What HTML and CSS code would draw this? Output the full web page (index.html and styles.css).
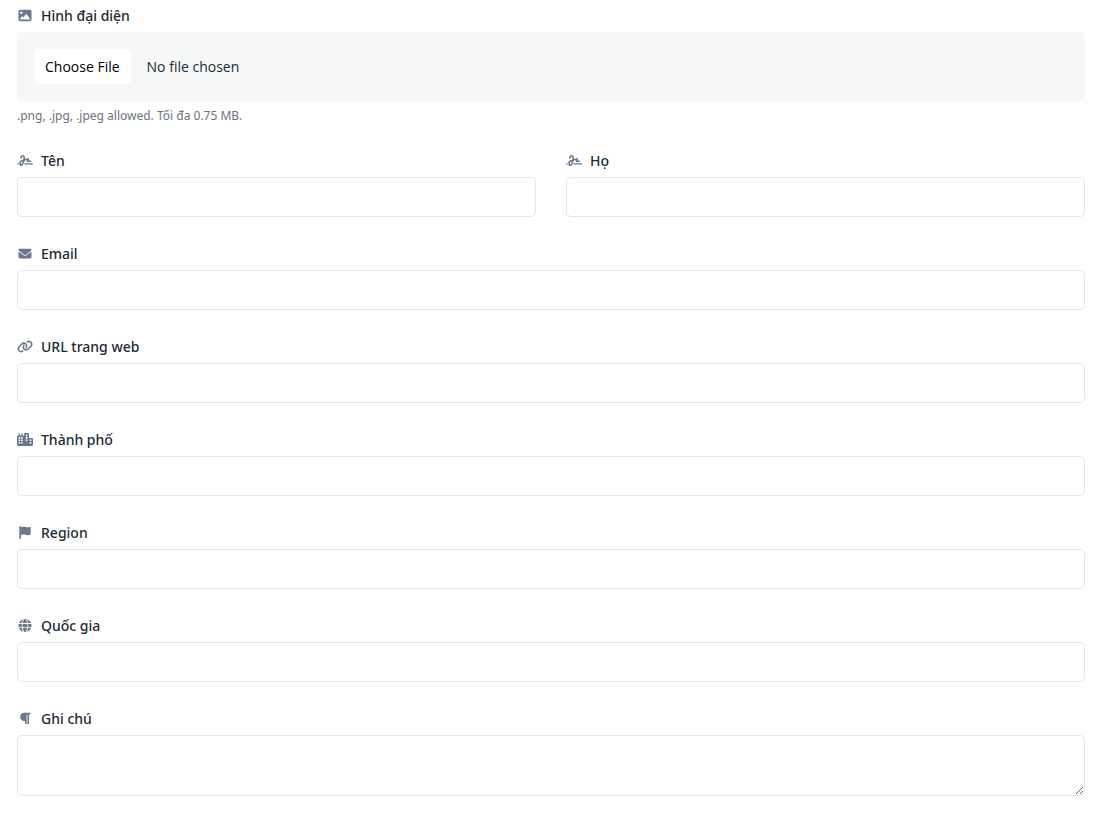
FILE: index.html
```html
<!DOCTYPE html>
<html lang="vi">
<head>
<meta charset="utf-8">
<meta name="viewport" content="width=device-width, initial-scale=1">
<title>Hồ sơ</title>
<link rel="stylesheet" href="styles.css">
</head>
<body>
<svg class="sprite" aria-hidden="true">
  <symbol id="signature" viewBox="0 0 640 512"><path d="M192 128c0-17.7 14.3-32 32-32s32 14.3 32 32v7.8c0 27.7-2.4 55.3-7.1 82.5l-84.4 25.3c-40.6 12.2-68.4 49.6-68.4 92v71.9c0 40 32.5 72.5 72.5 72.5c26 0 50-13.9 62.9-36.5l13.9-24.3c26.8-47 46.5-97.7 58.4-150.5l94.4-28.3-12.5 37.5c-3.3 9.8-1.6 20.5 4.4 28.8s15.7 13.3 26 13.3H544c17.7 0 32-14.3 32-32s-14.3-32-32-32H460.4l18-53.9c3.8-11.3 .9-23.8-7.4-32.4s-20.7-11.8-32.2-8.4L316.4 198.1c2.4-20.7 3.6-41.4 3.6-62.3V128c0-53-43-96-96-96s-96 43-96 96v32c0 17.7 14.3 32 32 32s32-14.3 32-32V128zm-9.2 177l49-14.7c-10.4 33.8-24.5 66.4-42.1 97.2l-13.9 24.3c-1.5 2.6-4.3 4.3-7.4 4.3c-4.7 0-8.5-3.8-8.5-8.5V335.6c0-14.1 9.3-26.6 22.8-30.7zM24 368c-13.3 0-24 10.7-24 24s10.7 24 24 24H64.3c-.2-2.8-.3-5.6-.3-8.5V368H24zm592 48c13.3 0 24-10.7 24-24s-10.7-24-24-24H305.9c-6.7 16.3-14.2 32.3-22.3 48H616z"/></symbol>
</svg>
<form class="profile">
  <div class="field">
    <label class="label" for="avatar">
      <svg class="icon" viewBox="0 0 512 512" aria-hidden="true"><path d="M0 96C0 60.7 28.7 32 64 32H448c35.3 0 64 28.7 64 64V416c0 35.3-28.7 64-64 64H64c-35.3 0-64-28.7-64-64V96zM323.8 202.5c-4.5-6.6-11.9-10.5-19.8-10.5s-15.4 3.9-19.8 10.5l-87 127.6L170.7 297c-4.6-5.7-11.5-9-18.7-9s-14.2 3.3-18.7 9l-64 80c-5.8 7.2-6.9 17.1-2.9 25.4s12.4 13.6 21.6 13.6h96 32H424c8.9 0 17.1-4.9 21.2-12.8s3.6-17.4-1.4-24.7l-120-176zM112 192a48 48 0 1 0 0-96 48 48 0 1 0 0 96z"/></svg>
      Hình đại diện
    </label>
    <input class="file" id="avatar" type="file" accept=".png,.jpg,.jpeg" aria-describedby="avatar-hint">
    <p class="hint" id="avatar-hint">.png, .jpg, .jpeg allowed. Tối đa 0.75 MB.</p>
  </div>
  <div class="row">
    <div class="field">
      <label class="label" for="first-name"><svg class="icon" aria-hidden="true"><use href="#signature"/></svg>Tên</label>
      <input class="control" id="first-name" type="text">
    </div>
    <div class="field">
      <label class="label" for="last-name"><svg class="icon" aria-hidden="true"><use href="#signature"/></svg>Họ</label>
      <input class="control" id="last-name" type="text">
    </div>
  </div>
  <div class="field">
    <label class="label" for="email">
      <svg class="icon" viewBox="0 0 512 512" aria-hidden="true"><path d="M48 64C21.5 64 0 85.5 0 112c0 15.1 7.1 29.3 19.2 38.4L236.8 313.6c11.4 8.5 27 8.5 38.4 0L492.8 150.4c12.1-9.1 19.2-23.3 19.2-38.4c0-26.5-21.5-48-48-48H48zM0 176V384c0 35.3 28.7 64 64 64H448c35.3 0 64-28.7 64-64V176L294.4 339.2c-22.8 17.1-54 17.1-76.8 0L0 176z"/></svg>
      Email
    </label>
    <input class="control" id="email" type="email">
  </div>
  <div class="field">
    <label class="label" for="url">
      <svg class="icon" viewBox="0 0 640 512" aria-hidden="true"><path d="M579.8 267.7c56.5-56.5 56.5-148 0-204.5c-50-50-128.8-56.5-186.3-15.4l-1.6 1.1c-14.4 10.3-17.7 30.3-7.4 44.6s30.3 17.7 44.6 7.4l1.6-1.1c32.1-22.9 76-19.3 103.8 8.6c31.5 31.5 31.5 82.5 0 114L422.3 334.8c-31.5 31.5-82.5 31.5-114 0c-27.9-27.9-31.5-71.8-8.6-103.8l1.1-1.6c10.3-14.4 6.9-34.4-7.4-44.6s-34.4-6.9-44.6 7.4l-1.1 1.6C206.5 251.2 213 330 263 380c56.5 56.5 148 56.5 204.5 0L579.8 267.7zM60.2 244.3c-56.5 56.5-56.5 148 0 204.5c50 50 128.8 56.5 186.3 15.4l1.6-1.1c14.4-10.3 17.7-30.3 7.4-44.6s-30.3-17.7-44.6-7.4l-1.6 1.1c-32.1 22.9-76 19.3-103.8-8.6C74 372 74 321 105.5 289.5L217.7 177.2c31.5-31.5 82.5-31.5 114 0c27.9 27.9 31.5 71.8 8.6 103.9l-1.1 1.6c-10.3 14.4-6.9 34.4 7.4 44.6s34.4 6.9 44.6-7.4l1.1-1.6C433.5 260.8 427 182 377 132c-56.5-56.5-148-56.5-204.5 0L60.2 244.3z"/></svg>
      URL trang web
    </label>
    <input class="control" id="url" type="url">
  </div>
  <div class="field">
    <label class="label" for="city">
      <svg class="icon" viewBox="0 0 640 512" aria-hidden="true"><path fill-rule="evenodd" d="M480 48c0-26.5-21.5-48-48-48H336c-26.5 0-48 21.5-48 48V96H224V24c0-13.3-10.7-24-24-24s-24 10.7-24 24V96H112V24c0-13.3-10.7-24-24-24S64 10.7 64 24V96H48C21.5 96 0 117.5 0 144V464c0 26.5 21.5 48 48 48H592c26.5 0 48-21.5 48-48V240c0-26.5-21.5-48-48-48H480V48zM64 160h64v64H64zM160 160h64v64h-64zM64 256h64v64H64zM160 256h64v64h-64zM64 352h64v64H64zM160 352h64v64h-64zM352 64h64v64h-64zM352 160h64v64h-64zM352 256h64v64h-64zM512 256h64v64h-64zM512 352h64v64h-64z"/></svg>
      Thành phố
    </label>
    <input class="control" id="city" type="text">
  </div>
  <div class="field">
    <label class="label" for="region">
      <svg class="icon" viewBox="0 0 448 512" aria-hidden="true"><path d="M64 32C64 14.3 49.7 0 32 0S0 14.3 0 32V480c0 17.7 14.3 32 32 32s32-14.3 32-32V352l64.3-16.1c41.1-10.3 84.6-5.5 122.5 13.4c44.2 22.1 95.5 24.8 141.7 7.4l34.7-13c12.5-4.7 20.8-16.6 20.8-30V66.1c0-23-24.2-38-44.8-27.7l-9.6 4.8c-46.3 23.2-100.8 23.2-147.1 0c-35.1-17.6-75.4-22-113.5-12.5L64 48V32z"/></svg>
      Region
    </label>
    <input class="control" id="region" type="text">
  </div>
  <div class="field">
    <label class="label" for="country">
      <svg class="icon" viewBox="0 0 512 512" aria-hidden="true"><path d="M352 256c0 22.2-1.2 43.6-3.3 64H163.3c-2.2-20.4-3.3-41.8-3.3-64s1.2-43.6 3.3-64H348.7c2.2 20.4 3.3 41.8 3.3 64zm28.8-64H503.9c5.3 20.5 8.1 41.9 8.1 64s-2.8 43.5-8.1 64H380.8c2.1-20.6 3.2-42 3.2-64s-1.1-43.4-3.2-64zm112.6-32H376.7c-10-63.9-29.8-117.4-55.3-151.6c78.3 20.7 142 77.5 171.9 151.6zm-149.1 0H167.7c6.1-36.4 15.5-68.6 27-94.7c10.5-23.6 22.2-40.7 33.5-51.5C239.4 3.2 248.7 0 256 0s16.6 3.2 27.8 13.8c11.3 10.8 23 27.9 33.5 51.5c11.6 26 20.9 58.2 27 94.7zm-209 0H18.6C48.6 85.9 112.2 29.1 190.6 8.4C165.1 42.6 145.3 96.1 135.3 160zM8.1 192H131.2c-2.1 20.6-3.2 42-3.2 64s1.1 43.4 3.2 64H8.1C2.8 299.5 0 278.1 0 256s2.8-43.5 8.1-64zM194.7 446.6c-11.6-26-20.9-58.2-27-94.6H344.3c-6.1 36.4-15.5 68.6-27 94.6c-10.5 23.6-22.2 40.7-33.5 51.5C272.6 508.8 263.3 512 256 512s-16.6-3.2-27.8-13.8c-11.3-10.8-23-27.9-33.5-51.5zM135.3 352c10 63.9 29.8 117.4 55.3 151.6C112.2 482.9 48.6 426.1 18.6 352H135.3zm358.1 0c-30 74.1-93.6 130.9-171.9 151.6c25.5-34.2 45.2-87.7 55.3-151.6H493.4z"/></svg>
      Quốc gia
    </label>
    <input class="control" id="country" type="text">
  </div>
  <div class="field">
    <label class="label" for="note">
      <svg class="icon" viewBox="0 0 448 512" aria-hidden="true"><path d="M192 32H416c17.7 0 32 14.3 32 32s-14.3 32-32 32H384V448c0 17.7-14.3 32-32 32s-32-14.3-32-32V96H288V448c0 17.7-14.3 32-32 32s-32-14.3-32-32V352H192c-88.4 0-160-71.6-160-160s71.6-160 160-160z"/></svg>
      Ghi chú
    </label>
    <textarea class="control area" id="note" rows="2"></textarea>
  </div>
</form>
</body>
</html>
```
FILE: styles.css
```css
* {
  box-sizing: border-box;
}

body {
  margin: 0;
  background: #fff;
  color: #212b37;
  font-family: "Noto Sans", "Open Sans", sans-serif;
  font-size: 14px;
}

.sprite {
  display: none;
}

.profile {
  display: flex;
  flex-direction: column;
  gap: 25px;
  padding: 4px 11px 22px 17px;
}

.row {
  display: grid;
  grid-template-columns: 1fr 1fr;
  gap: 30px;
}

.field {
  display: flex;
  flex-direction: column;
}

.label {
  display: flex;
  align-items: center;
  gap: 8px;
  margin-bottom: 5px;
  font-weight: 500;
  line-height: 23px;
}

.icon {
  width: 16px;
  height: 13px;
  fill: #6b778c;
}

.control {
  width: 100%;
  height: 40px;
  padding: 8px 12px;
  border: 1px solid #e2e6e8;
  border-radius: 5px;
  background: #fff;
  color: inherit;
  font: inherit;
}

.area {
  height: 61px;
  resize: vertical;
}

.file {
  width: 100%;
  padding: 17px;
  border-radius: 5px;
  background: #f6f8f8;
  font-family: "Open Sans", "Noto Sans", sans-serif;
  font-size: 14px;
}

.file::file-selector-button {
  height: 35px;
  margin: 0 16px 0 0;
  padding: 0 11px;
  border: 0;
  border-radius: 5px;
  background: #fff;
  color: #000;
  font: inherit;
}

.hint {
  margin: 6px 0 0;
  color: #6c757d;
  font-size: 12px;
  line-height: 17px;
}
```
